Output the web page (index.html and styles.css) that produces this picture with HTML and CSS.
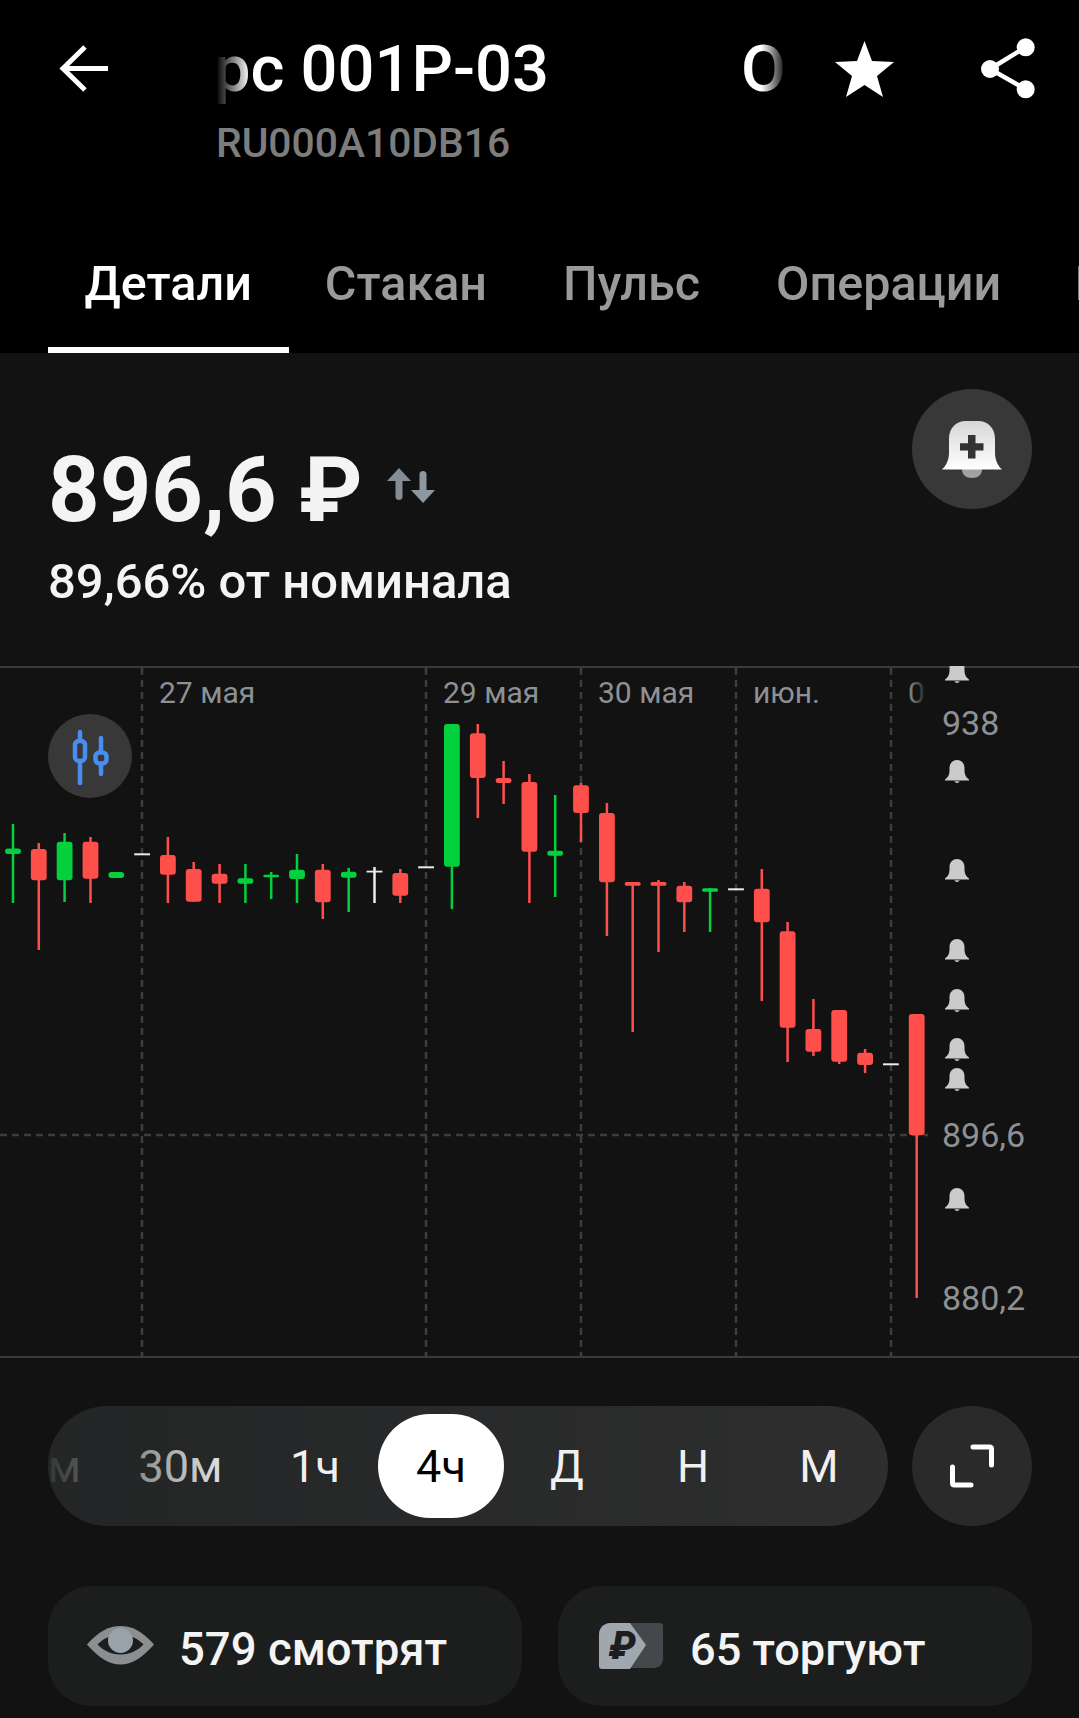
FILE: index.html
```html
<!DOCTYPE html>
<html lang="ru">
<head>
    <meta charset="UTF-8">
    <meta name="viewport" content="width=device-width, initial-scale=1.0">
    <title>Детали облигации</title>
    <link rel="stylesheet" href="styles.css">
</head>
<body>

    <!-- Шапка -->
    <header class="header">
        <div class="topbar">
            <svg class="back-icon" width="52" height="48" viewBox="0 0 52 48"><path d="M50 23.500H5M27 2L5 23.500L27 45"/></svg>
            <div class="title-block">
                <div class="title">рс 001Р-03</div>
                <div class="isin">RU000A10DB16</div>
            </div>
            <div class="title-tail">О</div>
            <svg class="star-icon" width="59" height="56" viewBox="0 0 59 56"><path d="M29.500 0L37 20L59 21L42 35L48 56L29.500 44L11 56L17 35L0 21L22 20Z"/></svg>
            <svg class="share-icon" width="56" height="62" viewBox="0 0 56 62"><path d="M45.700 9.300L10 31L45.700 51.300"/><circle cx="45.700" cy="9.300" r="9"/><circle cx="10" cy="31" r="9"/><circle cx="45.700" cy="51.300" r="9"/></svg>
        </div>
        <nav class="tabs">
            <div class="tab active">Детали</div>
            <div class="tab">Стакан</div>
            <div class="tab">Пульс</div>
            <div class="tab">Операции</div>
            <div class="tab tab-next">Новости</div>
        </nav>
    </header>

    <!-- Цена -->
    <section class="price-section">
        <div class="price-block">
            <div class="price">
                <span>896,6 ₽</span>
                <svg class="swap-icon" width="50" height="38" viewBox="0 0 50 38"><path class="swap-up" d="M13 1L25 14H16.500V30C16.500 34 9.500 34 9.500 30V14H1Z"/><path class="swap-down" d="M37 36L49 23H40.500V7C40.500 3 33.500 3 33.500 7V23H25Z"/></svg>
            </div>
            <div class="price-note">89,66% от номинала</div>
        </div>
        <div class="round-btn bell-btn">
            <svg width="120" height="120" viewBox="0 0 120 120">
                <defs>
                    <linearGradient id="bellFill" x1="0" y1="0" x2="0" y2="1"><stop offset="0" stop-color="#d6d6d6"/><stop offset="1" stop-color="#ffffff"/></linearGradient>
                </defs>
                <path fill="#a2a2a2" d="M50 80h20c0 6-4 9-10 9s-10-3-10-9Z"/>
                <path fill="url(#bellFill)" d="M30 80.500C34 77 37 71 37 64V50C37 39 44 32 54 32H66C76 32 83 39 83 50V64C83 71 86 77 90 80.500Z"/>
                <path fill="#333" d="M56 46h7.500v8.200h8v7.200h-8v8.200H56v-8.200h-8v-7.200h8Z"/>
            </svg>
        </div>
    </section>

    <!-- График -->
    <section class="chart">
        <svg class="chart-svg" width="1079" height="692" viewBox="0 666 1079 692">
            <defs>
                <symbol id="axisBell" viewBox="0 0 24 23">
                    <path d="M0 19.500C2.500 18 4.500 15 4.500 11V8C4.500 3 8 0 12 0S19.500 3 19.500 8V11C19.500 15 21.500 18 24 19.500V20.500H0Z"/>
                    <path d="M9.500 21.300H14.500C14 23.500 10 23.500 9.500 21.300Z"/>
                </symbol>
                <linearGradient id="fadeLabel" gradientUnits="userSpaceOnUse" x1="908" y1="0" x2="928" y2="0"><stop offset="0" stop-color="#8e9194"/><stop offset="1" stop-color="#8e9194" stop-opacity="0"/></linearGradient>
            </defs>

            <path class="axis-line" d="M0 667H1079M0 1357H1079"/>
            <path class="grid-line" d="M142 668V1356M426 668V1356M581 668V1356M736 668V1356M891 668V1356M0 1135H928"/>

            <text class="time-label" x="159" y="703">27 мая</text>
            <text class="time-label" x="443" y="703">29 мая</text>
            <text class="time-label" x="598" y="703">30 мая</text>
            <text class="time-label" x="753" y="703">июн.</text>
            <text class="time-label time-fade" x="908" y="703">0</text>

            <text class="price-label" x="942" y="735">938</text>
            <text class="price-label" x="942" y="1147">896,6</text>
            <text class="price-label" x="942" y="1310">880,2</text>

            <g class="axis-bells">
                <use href="#axisBell" x="945" y="660" width="24" height="23"/>
                <use href="#axisBell" x="945" y="760" width="24" height="23"/>
                <use href="#axisBell" x="945" y="859" width="24" height="23"/>
                <use href="#axisBell" x="945" y="939" width="24" height="23"/>
                <use href="#axisBell" x="945" y="989" width="24" height="23"/>
                <use href="#axisBell" x="945" y="1038" width="24" height="23"/>
                <use href="#axisBell" x="945" y="1068" width="24" height="23"/>
                <use href="#axisBell" x="945" y="1188" width="24" height="23"/>
            </g>

            <!-- Свечи -->
            <path class="wick wick-up" d="M13 824V903M64.600 833V902M245.400 864V903M271.200 872V899M297 854V903M348.700 868V912M451.900 724V909M555.200 795V897M710.100 888V932"/>
            <path class="wick wick-down" d="M38.800 843V950M90.500 837V903M167.900 837V903M193.700 862V902M219.600 864V903M322.800 864V919M400.300 869V903M477.800 724V818M503.600 761V804M529.400 774V903M581 783V842M606.900 803V936M632.700 882V1032M658.500 880V952M684.300 882V932M761.800 869V1001M787.600 922V1062M813.400 999V1056M839.200 1010V1064M865.100 1049V1073M916.700 1014V1298"/>
            <path class="wick wick-flat" d="M374.500 867V903"/>

            <g class="body-up">
                <rect x="5.100" y="848.500" width="15.800" height="5.400" rx="2.500"/>
                <rect x="56.700" y="841.700" width="15.800" height="38.600" rx="3"/>
                <rect x="108.400" y="872" width="15.800" height="6" rx="3"/>
                <rect x="237.500" y="878.300" width="15.800" height="5.400" rx="2.500"/>
                <rect x="263.300" y="874.700" width="15.800" height="2.600" rx="1.300"/>
                <rect x="289.100" y="869.700" width="15.800" height="9.300" rx="3"/>
                <rect x="340.800" y="871.700" width="15.800" height="6" rx="3"/>
                <rect x="444" y="724" width="15.800" height="142.700" rx="3"/>
                <rect x="547.300" y="850.700" width="15.800" height="5" rx="2.500"/>
                <rect x="702.200" y="888.300" width="15.800" height="3.400" rx="1.500"/>
            </g>
            <g class="body-down">
                <rect x="30.900" y="849" width="15.800" height="31.300" rx="3"/>
                <rect x="82.600" y="841.700" width="15.800" height="37" rx="3"/>
                <rect x="160" y="855" width="15.800" height="19.700" rx="3"/>
                <rect x="185.800" y="869" width="15.800" height="32.700" rx="3"/>
                <rect x="211.700" y="873.700" width="15.800" height="10" rx="3"/>
                <rect x="314.900" y="869.700" width="15.800" height="32.600" rx="3"/>
                <rect x="392.400" y="873" width="15.800" height="22.700" rx="3"/>
                <rect x="469.900" y="733.300" width="15.800" height="44.700" rx="3"/>
                <rect x="495.700" y="778" width="15.800" height="5" rx="2.500"/>
                <rect x="521.500" y="782" width="15.800" height="69.700" rx="3"/>
                <rect x="573.100" y="785.300" width="15.800" height="27.700" rx="3"/>
                <rect x="599" y="813" width="15.800" height="69.300" rx="3"/>
                <rect x="624.800" y="882" width="15.800" height="3.700" rx="1.500"/>
                <rect x="650.600" y="882" width="15.800" height="3.700" rx="1.500"/>
                <rect x="676.400" y="885.700" width="15.800" height="16.600" rx="3"/>
                <rect x="753.900" y="888.700" width="15.800" height="33.600" rx="3"/>
                <rect x="779.700" y="931.300" width="15.800" height="96.400" rx="3"/>
                <rect x="805.500" y="1029" width="15.800" height="22.700" rx="3"/>
                <rect x="831.300" y="1010" width="15.800" height="51.700" rx="3"/>
                <rect x="857.200" y="1052.700" width="15.800" height="12.300" rx="3"/>
                <rect x="908.800" y="1014" width="15.800" height="121.300" rx="3"/>
            </g>
            <g class="body-flat">
                <rect x="134.200" y="853.300" width="15.800" height="2"/>
                <rect x="366.600" y="870.700" width="15.800" height="1.800"/>
                <rect x="418.200" y="866.300" width="15.800" height="2"/>
                <rect x="728.100" y="888.300" width="15.800" height="2"/>
                <rect x="883" y="1063.300" width="15.800" height="2"/>
            </g>
        </svg>
        <div class="round-btn candle-btn">
            <svg width="84" height="84" viewBox="0 0 84 84">
                <path d="M32 18V26M32 48V69M53 24V37M53 51V60"/>
                <rect x="27" y="27" width="10" height="20" rx="4"/>
                <rect x="47.500" y="38.500" width="11" height="11" rx="4"/>
            </svg>
        </div>
    </section>

    <!-- Периоды -->
    <section class="controls">
        <div class="periods">
            <div class="period period-cut">м</div>
            <div class="period period-wide">30м</div>
            <div class="period">1ч</div>
            <div class="period active">4ч</div>
            <div class="period">Д</div>
            <div class="period">Н</div>
            <div class="period">М</div>
        </div>
        <div class="round-btn expand-btn">
            <svg width="44" height="44" viewBox="0 0 44 44"><path d="M23 3H39.500C41 3 41.500 3.500 41.500 5V21M2.500 23V39C2.500 40.500 3 41 4.500 41H21"/></svg>
        </div>
    </section>

    <!-- Счетчики -->
    <section class="stats">
        <div class="stat">
            <svg class="eye-icon" width="67" height="40" viewBox="0 0 67 40">
                <path fill="#8b8f92" d="M0 18.500C12 5 22 0 33.500 0C45 0 55 5 67 18.500C55 32 45 38.500 33.500 38.500C22 38.500 12 32 0 18.500Z"/>
                <path fill="#1c1e1e" d="M10.500 18.500C16 13 22 9 33.500 9C45 9 51 13 56.500 18.500C51 24 44 28.500 33.500 28.500C23 28.500 16 24 10.500 18.500Z"/>
                <circle fill="#99a2a9" cx="33.500" cy="14.500" r="12.500"/>
            </svg>
            <span class="stat-text">579 смотрят</span>
        </div>
        <div class="stat">
            <svg class="ruble-icon" width="64" height="47" viewBox="0 0 64 47">
                <path fill="#45484b" d="M30 0H61C63 0 64 1 64 3V36C64 41 60 45 55 45H30Z"/>
                <path fill="#a0a7ae" d="M11 0H31L47 22L31 46H3C1 46 0 45 0 43V11C0 5 5 0 11 0Z"/>
                <text class="ruble-glyph" x="10" y="36">₽</text>
            </svg>
            <span class="stat-text stat-text-trade">65 торгуют</span>
        </div>
    </section>

</body>
</html>
```

FILE: styles.css
```css
* {
    box-sizing: border-box;
}
html, body {
    margin: 0;
    padding: 0;
}
body {
    width: 1079px;
    height: 1718px;
    overflow: hidden;
    background-color: #121212;
    color: #fff;
    font-family: Roboto, "Noto Sans", sans-serif;
}

.header {
    height: 353px;
    background-color: #000;
    display: flex;
    flex-direction: column;
    justify-content: space-between;
    overflow: hidden;
}
.topbar {
    display: flex;
    align-items: flex-start;
    padding: 33px 0 0 58px;
}
.back-icon {
    flex-shrink: 0;
    margin-top: 12px;
    fill: none;
    stroke: #fff;
    stroke-width: 5;
}
.title-block {
    width: 512px;
    margin-left: 104px;
}
.title {
    font-size: 65px;
    font-weight: 500;
    line-height: 72px;
    white-space: nowrap;
    -webkit-mask-image: linear-gradient(to right, transparent 2px, #000 36px);
    mask-image: linear-gradient(to right, transparent 2px, #000 36px);
}
.isin {
    margin: 14px 0 0 2px;
    font-size: 40.8px;
    font-weight: 500;
    line-height: 48px;
    color: #7d7d7d;
}
.title-tail {
    width: 48px;
    margin-left: 15px;
    font-size: 65px;
    font-weight: 500;
    line-height: 72px;
    -webkit-mask-image: linear-gradient(to right, #000 20px, transparent 46px);
    mask-image: linear-gradient(to right, #000 20px, transparent 46px);
}
.star-icon {
    flex-shrink: 0;
    margin: 8px 0 0 46px;
    fill: #fff;
}
.share-icon {
    flex-shrink: 0;
    margin: 5px 0 0 86px;
    fill: #fff;
}
.share-icon path {
    fill: none;
    stroke: #fff;
    stroke-width: 4.5;
}

.tabs {
    display: flex;
    padding-left: 48px;
}
.tab {
    padding: 0 38px 35px;
    border-bottom: 6px solid transparent;
    font-size: 48.5px;
    font-weight: 500;
    line-height: 56px;
    white-space: nowrap;
    color: #9a9a9a;
}
.tab.active {
    padding: 0 37.5px 35px 36.5px;
    margin-right: -2.5px;
    color: #fff;
    border-bottom-color: #fff;
}
.tab-next {
    padding-left: 35.5px;
}

.price-section {
    height: 313px;
    display: flex;
    justify-content: space-between;
    align-items: flex-start;
    padding: 36px 47px 0 48px;
}
.price-block {
    margin-top: 52px;
}
.price {
    display: flex;
    align-items: flex-start;
    font-size: 90px;
    font-weight: 700;
    line-height: 100px;
    color: #f4f4f4;
}
.swap-icon {
    margin: 26px 0 0 23px;
}
.swap-up {
    fill: #858c93;
}
.swap-down {
    fill: #8f979e;
}
.price-note {
    margin-top: 13px;
    font-size: 49px;
    font-weight: 500;
    line-height: 56px;
    color: #f4f4f4;
}

.round-btn {
    display: flex;
    align-items: center;
    justify-content: center;
    border-radius: 50%;
}
.bell-btn {
    flex-shrink: 0;
    width: 120px;
    height: 120px;
    background-color: #383838;
}

.chart {
    position: relative;
    height: 692px;
}
.chart-svg {
    display: block;
}
.axis-line {
    fill: none;
    stroke: #3a3a3a;
    stroke-width: 2;
}
.grid-line {
    fill: none;
    stroke: #3d3d3d;
    stroke-width: 2.5;
    stroke-dasharray: 7 5;
}
.time-label {
    font-size: 30px;
    fill: #8e9194;
}
.time-fade {
    fill: url(#fadeLabel);
}
.price-label {
    font-size: 34px;
    fill: #8e9194;
}
.axis-bells {
    fill: #c9cbcd;
}
.wick {
    fill: none;
    stroke-width: 2.5;
}
.wick-up {
    stroke: #04d03e;
}
.wick-down {
    stroke: #ff4f4b;
}
.wick-flat {
    stroke: #ececec;
}
.body-up {
    fill: #04d03e;
}
.body-down {
    fill: #ff4f4b;
}
.body-flat {
    fill: #ececec;
}
.candle-btn {
    position: absolute;
    left: 48px;
    top: 48px;
    width: 84px;
    height: 84px;
    background-color: #383838;
}
.candle-btn svg {
    fill: none;
    stroke: #4a8df0;
    stroke-width: 4.5;
    stroke-linecap: round;
}

.controls {
    display: flex;
    justify-content: space-between;
    margin-top: 48px;
    padding: 0 47px 0 48px;
}
.periods {
    position: relative;
    width: 840px;
    height: 120px;
    display: flex;
    align-items: center;
    justify-content: flex-end;
    padding-right: 6px;
    overflow: hidden;
    border-radius: 60px;
    background: linear-gradient(to right, #232526, #2e2e2e);
}
.periods::before {
    content: "";
    position: absolute;
    left: 0;
    top: 0;
    bottom: 0;
    width: 190px;
    background: linear-gradient(to right, rgba(36, 38, 38, 0.92), rgba(36, 38, 38, 0));
}
.period {
    flex-shrink: 0;
    width: 126px;
    height: 104px;
    display: flex;
    align-items: center;
    justify-content: center;
    border-radius: 52px;
    font-size: 45px;
    color: #f0f0f0;
}
.period.active {
    background-color: #fff;
    color: #000;
}
.period-wide {
    width: 146px;
    padding-left: 3px;
}
.period-cut {
    width: 59px;
    justify-content: flex-end;
    padding-right: 25px;
}
.expand-btn {
    flex-shrink: 0;
    width: 120px;
    height: 120px;
    background-color: #2a2a2a;
}
.expand-btn svg {
    fill: none;
    stroke: #fff;
    stroke-width: 5;
    stroke-linecap: round;
}

.stats {
    display: flex;
    gap: 36px;
    margin-top: 60px;
    padding: 0 47px 0 48px;
}
.stat {
    flex: 1;
    height: 120px;
    display: flex;
    align-items: center;
    border-radius: 44px;
    background-color: #1c1e1e;
    font-size: 45.5px;
    font-weight: 500;
    color: #f4f4f4;
}
.stat-text {
    padding-top: 6px;
}
.stat-text-trade {
    font-size: 45.2px;
}
.eye-icon {
    margin-left: 39px;
    margin-right: 25px;
}
.ruble-icon {
    margin-left: 41px;
    margin-right: 27px;
}
.ruble-glyph {
    font-size: 38px;
    font-weight: 900;
    font-style: italic;
    fill: #1b1d1e;
}
```
